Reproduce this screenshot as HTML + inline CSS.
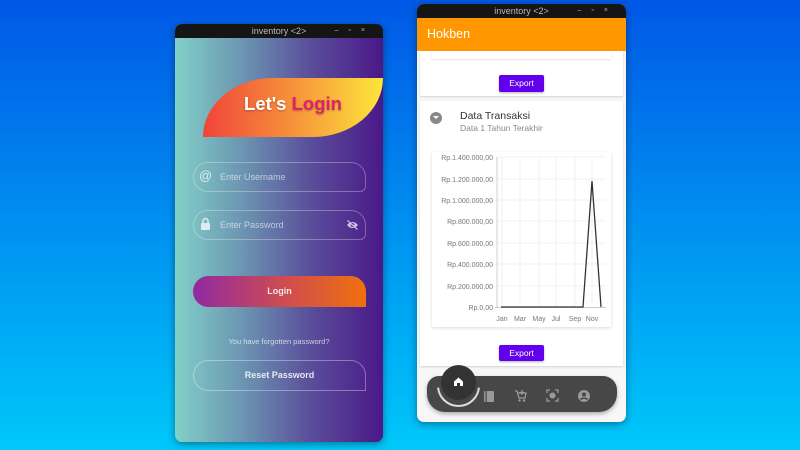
<!DOCTYPE html>
<html><head><meta charset="utf-8"><style>
*{margin:0;padding:0;box-sizing:border-box}
body{width:800px;height:450px;overflow:hidden;background:linear-gradient(180deg,#0058e6,#00c8fa);font-family:"Liberation Sans",sans-serif;position:relative}
.a{position:absolute}
.tb{background:#151515;color:#bbb;font-size:9px;text-align:center;line-height:14px}
.win{border-radius:7px;overflow:hidden;box-shadow:0 2px 8px rgba(0,0,0,.4)}
.inp{border:1px solid rgba(255,255,255,.3);border-radius:15px 15px 6px 15px;color:rgba(255,255,255,.6);font-size:9px;line-height:28px;padding-left:26px}
.btn{background:#6200ee;color:#fff;font-size:8.5px;text-align:center;border-radius:2px;box-shadow:0 1px 2px rgba(0,0,0,.3)}
</style></head><body>
<div class="a win" style="left:175px;top:24px;width:208px;height:418px;background:linear-gradient(90deg,#82d0c8 0%,#6a90b0 35%,#5a4e9a 65%,#4a1888 100%)">
 <div class="a tb" style="left:0;top:0;width:208px;height:14px">inventory &lt;2&gt;<span style="position:absolute;right:8px;letter-spacing:10px;font-size:7px">–▫×</span></div>
 <div class="a" style="left:28px;top:54px;width:180px;height:59px;background:linear-gradient(90deg,#f0443a,#f7923a 50%,#fde63c);border-radius:70px 0 70px 0/59px 0 59px 0"></div>
 <div class="a" style="left:30px;top:69px;width:176px;text-align:center;font-size:18.5px;font-weight:bold;color:#fff;text-shadow:0 1px 2px rgba(0,0,0,.3)">Let's <span style="color:#e0206a">Login</span></div>
 <div class="a inp" style="left:18px;top:138px;width:173px;height:30px">Enter Username</div>
 <div class="a" style="left:24px;top:144px;color:rgba(255,255,255,.75);font-size:13px">@</div>
 <div class="a inp" style="left:18px;top:186px;width:173px;height:30px">Enter Password</div>
 <svg class="a" style="left:25px;top:193px" width="11" height="14" viewBox="0 0 11 14"><rect x="1" y="6" width="9" height="7" rx="1" fill="rgba(255,255,255,.75)"/><path d="M3 6V4a2.5 2.5 0 0 1 5 0v2" stroke="rgba(255,255,255,.75)" stroke-width="1.5" fill="none"/></svg>
 <svg class="a" style="left:171px;top:196px" width="13" height="10" viewBox="0 0 13 10"><path d="M1 5Q6.5-1 12 5Q6.5 11 1 5Z" fill="rgba(255,255,255,.75)"/><circle cx="6.5" cy="5" r="2" fill="#54479a"/><path d="M2 0L11 10" stroke="#54479a" stroke-width="1.2"/><path d="M1.5 0.5L11.5 9.5" stroke="rgba(255,255,255,.8)" stroke-width="1"/></svg>
 <div class="a" style="left:18px;top:252px;width:173px;height:31px;background:linear-gradient(90deg,#9229a2,#d04e4c 55%,#f0700e);border-radius:16px 16px 0 16px;color:rgba(255,255,255,.85);font-size:9px;font-weight:bold;text-align:center;line-height:31px">Login</div>
 <div class="a" style="left:0;top:313px;width:208px;text-align:center;color:rgba(255,255,255,.7);font-size:7.5px">You have forgotten password?</div>
 <div class="a" style="left:18px;top:336px;width:173px;height:31px;border:1px solid rgba(255,255,255,.35);border-radius:16px 16px 0 16px;color:rgba(255,255,255,.85);font-size:9px;font-weight:bold;text-align:center;line-height:29px">Reset Password</div>
</div>
<div class="a win" style="left:417px;top:4px;width:209px;height:418px;background:#f7f7f7">
 <div class="a tb" style="left:0;top:0;width:209px;height:14px">inventory &lt;2&gt;<span style="position:absolute;right:8px;letter-spacing:10px;font-size:7px">–▫×</span></div>
 <div class="a" style="left:0;top:14px;width:209px;height:33px;background:#ff9800;color:#fff;font-size:12.5px;line-height:33px;padding-left:10px">Hokben</div>
 <div class="a" style="left:3px;top:47px;width:203px;height:45px;background:#fff;box-shadow:0 1px 2px rgba(0,0,0,.15)"></div>
 <div class="a" style="left:15px;top:47px;width:179px;height:8px;background:#fff;box-shadow:0 1px 2px rgba(0,0,0,.12)"></div>
 <div class="a btn" style="left:82px;top:71px;width:45px;height:17px;line-height:17px">Export</div>
 <div class="a" style="left:3px;top:97px;width:203px;height:265px;background:#fff;box-shadow:0 1px 2px rgba(0,0,0,.15)"></div>
 <div class="a" style="left:13px;top:108px;width:12px;height:12px;border-radius:50%;background:#888"></div>
 <div class="a" style="left:16px;top:112px;width:0;height:0;border-left:3px solid transparent;border-right:3px solid transparent;border-top:3px solid #fff"></div>
 <div class="a" style="left:43px;top:106px;font-size:10.5px;color:#333">Data Transaksi</div>
 <div class="a" style="left:43px;top:119px;font-size:8.5px;color:#888">Data 1 Tahun Terakhir</div>
 <div class="a" style="left:15px;top:148px;width:179px;height:175px;background:#fff;box-shadow:0 1px 3px rgba(0,0,0,.15)"></div>
 <svg class="a" style="left:0;top:0" width="209" height="418" viewBox="417 4 209 418">
  <g stroke="#ebebeb" stroke-width="0.7">
   <line x1="497" y1="157" x2="605" y2="157"/><line x1="497" y1="179" x2="605" y2="179"/><line x1="497" y1="200" x2="605" y2="200"/><line x1="497" y1="221" x2="605" y2="221"/><line x1="497" y1="243" x2="605" y2="243"/><line x1="497" y1="264" x2="605" y2="264"/><line x1="497" y1="286" x2="605" y2="286"/>
   <line x1="502" y1="157" x2="502" y2="307"/><line x1="520" y1="157" x2="520" y2="307"/><line x1="539" y1="157" x2="539" y2="307"/><line x1="556" y1="157" x2="556" y2="307"/><line x1="575" y1="157" x2="575" y2="307"/><line x1="592" y1="157" x2="592" y2="307"/>
  </g>
  <line x1="497" y1="157" x2="497" y2="308" stroke="#bbb" stroke-width="0.7"/>
  <line x1="495" y1="307.5" x2="606" y2="307.5" stroke="#bbb" stroke-width="0.7"/>
  <g font-size="7" fill="#777" text-anchor="end" font-family="Liberation Sans">
   <text x="493" y="160">Rp.1.400.000,00</text><text x="493" y="182">Rp.1.200.000,00</text><text x="493" y="203">Rp.1.000.000,00</text><text x="493" y="224">Rp.800.000,00</text><text x="493" y="246">Rp.600.000,00</text><text x="493" y="267">Rp.400.000,00</text><text x="493" y="289">Rp.200.000,00</text><text x="493" y="310">Rp.0,00</text>
  </g>
  <g font-size="7" fill="#777" text-anchor="middle" font-family="Liberation Sans">
   <text x="502" y="321">Jan</text><text x="520" y="321">Mar</text><text x="539" y="321">May</text><text x="556" y="321">Jul</text><text x="575" y="321">Sep</text><text x="592" y="321">Nov</text>
  </g>
  <polyline points="501,307 583,307 592,181 601,307" fill="none" stroke="#333" stroke-width="1.3"/>
 </svg>
 <div class="a btn" style="left:82px;top:341px;width:45px;height:16px;line-height:16px">Export</div>
 <div class="a" style="left:10px;top:372px;width:190px;height:36px;background:#474747;border-radius:12px 14px 18px 18px;box-shadow:0 2px 4px rgba(0,0,0,.3)"></div>
 <div class="a" style="left:20px;top:360px;width:43px;height:43px;border-radius:50%;border:2px solid #ddd;clip-path:inset(55% 0 0 0)"></div>
 <div class="a" style="left:24px;top:361px;width:35px;height:35px;border-radius:50%;background:#333"></div>
 <svg class="a" style="left:36px;top:372px" width="11" height="11" viewBox="0 0 11 11"><path d="M1 5.5L5.5 1.5 10 5.5V10H7V7H4V10H1Z" fill="#fff"/></svg>
 <svg class="a" style="left:66px;top:386px" width="12" height="13" viewBox="0 0 12 13"><rect x="1" y="1" width="10" height="11" rx="1" fill="#9a9a9a"/><rect x="2.5" y="1" width="1.2" height="11" fill="#474747"/></svg>
 <svg class="a" style="left:97px;top:385px" width="13" height="13" viewBox="0 0 13 13"><path d="M1 2H3L5 9H11L12 4H4" fill="none" stroke="#9a9a9a" stroke-width="1.3"/><circle cx="5.5" cy="11.5" r="1.2" fill="#9a9a9a"/><circle cx="10" cy="11.5" r="1.2" fill="#9a9a9a"/><path d="M8 1V6M5.5 3.5H10.5" stroke="#9a9a9a" stroke-width="1.2"/></svg>
 <svg class="a" style="left:129px;top:385px" width="13" height="13" viewBox="0 0 13 13"><path d="M1 4V1H4M9 1H12V4M12 9V12H9M4 12H1V9" fill="none" stroke="#9a9a9a" stroke-width="1.3"/><circle cx="6.5" cy="6.5" r="3" fill="#9a9a9a"/></svg>
 <svg class="a" style="left:161px;top:386px" width="12" height="12" viewBox="0 0 12 12"><circle cx="6" cy="6" r="6" fill="#9a9a9a"/><circle cx="6" cy="4.5" r="2" fill="#474747"/><path d="M2.5 9.5Q6 6.5 9.5 9.5" stroke="#474747" stroke-width="1.5" fill="none"/></svg>
</div>
</body></html>
